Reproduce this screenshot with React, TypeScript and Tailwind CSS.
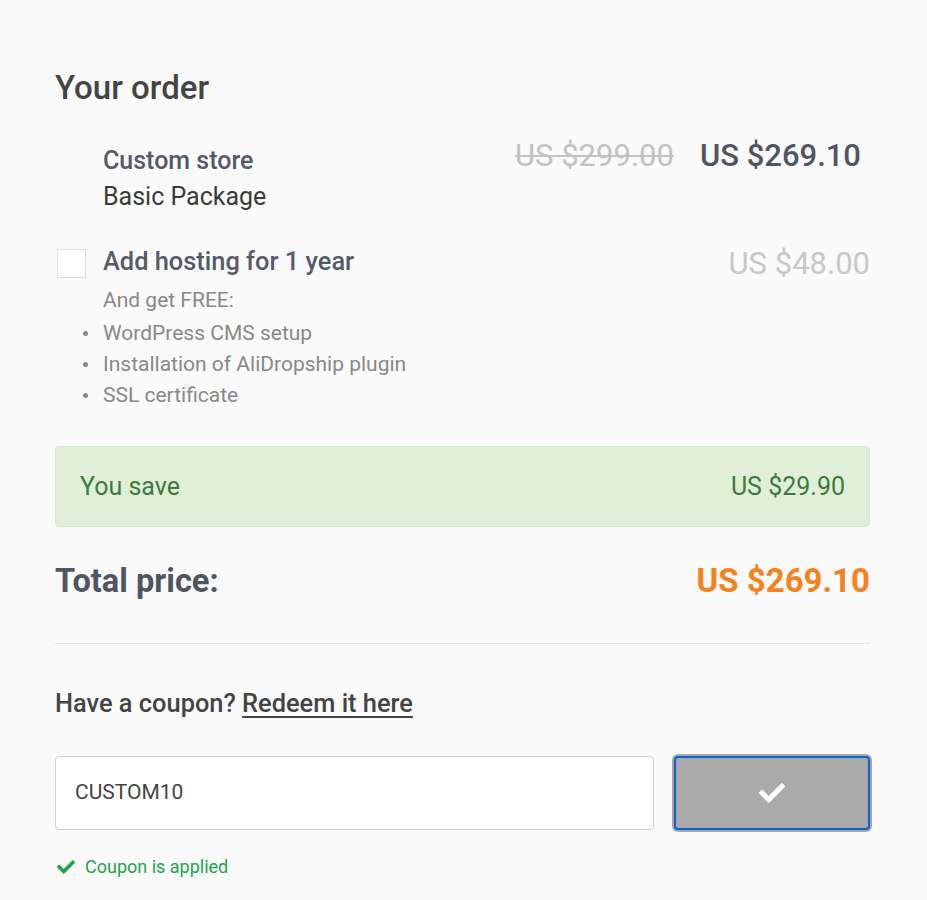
import React from 'react';
import { FaCheck } from 'react-icons/fa';

const perks = ['WordPress CMS setup', 'Installation of AliDropship plugin', 'SSL certificate'];

const App: React.FC = () => {
  return (
    <div className="min-h-[900px] bg-[#fafafa] font-['Roboto',sans-serif]">
      <div className="ml-[55px] w-[815px] pt-[68px]">
        <h2 className="text-[33px] leading-[40px] font-medium text-[#444444]">Your order</h2>

        {/* Product */}
        <div className="mt-[35px] flex items-start justify-between pl-[48px]">
          <div>
            <p className="text-[25px] leading-[36px] font-medium text-[#555b66]">Custom store</p>
            <p className="text-[25px] leading-[36px] text-[#3a3a3a]">Basic Package</p>
          </div>
          <div className="-mt-[5px] flex items-baseline gap-[26px] pr-[9px]">
            <span className="text-[31px] leading-[36px] text-[#c2c2c2] line-through decoration-[2px]">US $299.00</span>
            <span className="text-[31px] leading-[36px] font-medium text-[#4f5562]">US $269.10</span>
          </div>
        </div>

        {/* Hosting */}
        <div className="mt-[28px] flex items-start justify-between">
          <div className="flex items-start gap-[17px]">
            <div className="mt-[6px] ml-[2px] h-[29px] w-[29px] border border-[#dcdcdc] bg-white" />
            <div>
              <p className="text-[25.4px] leading-[36px] font-medium text-[#555b66]">Add hosting for 1 year</p>
              <p className="mt-[6px] text-[21px] leading-[31px] text-[#888888]">And get FREE:</p>
              <ul className="mt-[2px] -ml-[20px]">
                {perks.map((p) => (
                  <li key={p} className="flex items-center text-[21px] leading-[31px] text-[#888888]">
                    <span className="mr-[15px] h-[5px] w-[5px] rounded-full bg-[#888888]" />
                    {p}
                  </li>
                ))}
              </ul>
            </div>
          </div>
          <span className="mt-[3px] text-[31px] leading-[36px] text-[#c8c8c8]">US $48.00</span>
        </div>

        {/* Savings */}
        <div className="mt-[35px] flex h-[81px] items-center justify-between rounded-[4px] border border-[#d6ebcc] bg-[#e0f0d8] px-[24px]">
          <span className="text-[25px] text-[#3f7a3b]">You save</span>
          <span className="text-[25px] text-[#3f7a3b]">US $29.90</span>
        </div>

        {/* Total */}
        <div className="mt-[34px] flex items-center justify-between">
          <span className="text-[32.6px] leading-[40px] font-bold text-[#505562]">Total price:</span>
          <span className="text-[33px] leading-[40px] font-bold text-[#f5821f]">US $269.10</span>
        </div>

        <div className="mt-[42px] h-px bg-[#e4e4e4]" />

        {/* Coupon */}
        <p className="mt-[44px] text-[25.4px] leading-[30px] font-medium text-[#444444]">
          Have a coupon? <a className="underline decoration-[2px] underline-offset-[4px]">Redeem it here</a>
        </p>

        <div className="mt-[38px] flex gap-[20px]">
          <div className="flex h-[74px] flex-1 items-center rounded-[4px] border border-[#cfcfcf] bg-white px-[19px]">
            <span className="text-[21px] text-[#444444]">CUSTOM10</span>
          </div>
          <button className="flex h-[74px] w-[196px] items-center justify-center rounded-[4px] border-2 border-[#0a62d0] bg-[#aaaaaa] shadow-[0_0_0_2px_#a9a9a9]">
            <FaCheck className="h-[26px] w-[26px] text-white" />
          </button>
        </div>

        <div className="mt-[25px] flex items-center gap-[10px] pl-[2px]">
          <FaCheck className="h-[18px] w-[18px] text-[#1fa34a]" />
          <span className="text-[18px] leading-[24px] text-[#1fa34a]">Coupon is applied</span>
        </div>
      </div>
    </div>
  );
};

export default App;
